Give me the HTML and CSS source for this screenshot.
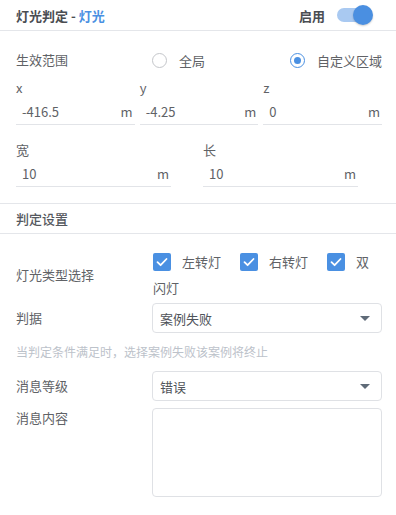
FILE: index.html
```html
<!DOCTYPE html>
<html lang="zh">
<head>
<meta charset="utf-8">
<link rel="stylesheet" href="styles.css">
</head>
<body>
<div class="panel">
  <div class="header">
    <div class="title">灯光判定 - <span class="accent">灯光</span></div>
    <div class="enable">
      <span>启用</span>
      <span class="switch"><span class="track"></span><span class="knob"></span></span>
    </div>
  </div>

  <div class="section">
    <div class="row scope">
      <div class="label">生效范围</div>
      <div class="radios">
        <label class="radio"><span class="dot"></span><span>全局</span></label>
        <label class="radio on"><span class="dot"></span><span>自定义区域</span></label>
      </div>
    </div>

    <div class="grid3">
      <div class="field">
        <div class="flabel">x</div>
        <div class="input"><span>-416.5</span><span>m</span></div>
      </div>
      <div class="field">
        <div class="flabel">y</div>
        <div class="input"><span>-4.25</span><span>m</span></div>
      </div>
      <div class="field">
        <div class="flabel">z</div>
        <div class="input"><span>0</span><span>m</span></div>
      </div>
    </div>

    <div class="grid2">
      <div class="field">
        <div class="flabel">宽</div>
        <div class="input"><span>10</span><span>m</span></div>
      </div>
      <div class="field">
        <div class="flabel">长</div>
        <div class="input"><span>10</span><span>m</span></div>
      </div>
    </div>
  </div>

  <div class="section-title">判定设置</div>

  <div class="section judge">
    <div class="row types">
      <div class="label">灯光类型选择</div>
      <div class="checks"><span class="cb"><svg viewBox="0 0 18 18" width="18" height="18"><path d="M4.5 9.2 L7.6 12.2 L13.5 6" fill="none" stroke="#fff" stroke-width="1.8" stroke-linecap="round" stroke-linejoin="round"/></svg></span><span class="ct">左转灯</span><span class="cb"><svg viewBox="0 0 18 18" width="18" height="18"><path d="M4.5 9.2 L7.6 12.2 L13.5 6" fill="none" stroke="#fff" stroke-width="1.8" stroke-linecap="round" stroke-linejoin="round"/></svg></span><span class="ct">右转灯</span><span class="cb"><svg viewBox="0 0 18 18" width="18" height="18"><path d="M4.5 9.2 L7.6 12.2 L13.5 6" fill="none" stroke="#fff" stroke-width="1.8" stroke-linecap="round" stroke-linejoin="round"/></svg></span><span class="ct last">双</span><span class="ct last">闪灯</span></div>
    </div>

    <div class="row sel-row">
      <div class="label">判据</div>
      <div class="select"><span>案例失败</span><span class="caret"></span></div>
    </div>

    <div class="hint">当判定条件满足时，选择案例失败该案例将终止</div>

    <div class="row sel-row">
      <div class="label">消息等级</div>
      <div class="select"><span>错误</span><span class="caret"></span></div>
    </div>

    <div class="row msg">
      <div class="label">消息内容</div>
      <div class="textarea"></div>
    </div>
  </div>
</div>
</body>
</html>
```

FILE: styles.css
```css
* { box-sizing: border-box; }
html, body { margin: 0; padding: 0; background: #fff; }
body {
  font-family: "Noto Sans CJK SC", "Noto Sans", sans-serif;
  font-size: 13px;
  color: #606266;
  width: 396px;
}
.header {
  height: 31px;
  display: flex;
  align-items: center;
  justify-content: space-between;
  padding: 0 23px 0 16px;
  border-bottom: 1px solid #e4e6ea;
}
.title { font-weight: 700; color: #4a4d52; font-size: 13px; }
.accent { color: #4a90e2; }
.enable {
  display: flex;
  align-items: center;
  gap: 12px;
  font-weight: 700;
  color: #4a4d52;
}
.switch {
  position: relative;
  width: 36px;
  height: 20px;
  display: inline-block;
}
.track {
  position: absolute;
  left: 0; top: 3px;
  width: 32px; height: 14px;
  border-radius: 7px;
  background: #a9c9f1;
}
.knob {
  position: absolute;
  right: 0; top: 0;
  width: 20px; height: 20px;
  border-radius: 50%;
  background: #4a8fe1;
  box-shadow: 0 1px 2px rgba(0,0,0,0.2);
}
.section { padding: 0 14px 0 16px; }
.row { display: flex; align-items: center; }
.label { width: 136px; flex: none; line-height: 20px; }
.scope { margin-top: 19px; height: 20px; }
.radios {
  flex: 1;
  display: flex;
  justify-content: space-between;
}
.radio { display: flex; align-items: center; gap: 12px; }
.dot {
  width: 15px; height: 15px;
  border-radius: 50%;
  border: 1px solid #c4c6ca;
  display: inline-block;
  position: relative;
}
.radio.on .dot { border-color: #4a90e2; }
.radio.on .dot::after {
  content: "";
  position: absolute;
  left: 3px; top: 3px;
  width: 7px; height: 7px;
  border-radius: 50%;
  background: #4a90e2;
}
.grid3 {
  display: grid;
  grid-template-columns: 1fr 1fr 1fr;
  column-gap: 5px;
  margin-top: 8px;
}
.grid2 {
  display: grid;
  grid-template-columns: 155px 155px;
  column-gap: 32px;
  margin-top: 15px;
}
.flabel { line-height: 20px; }
.input {
  margin-top: 2px;
  height: 25px;
  line-height: 24px;
  border-bottom: 1px solid #e2e4e8;
  display: flex;
  justify-content: space-between;
  padding: 0 2px 0 6px;
}
.section-title {
  margin-top: 16px;
  border-top: 1px solid #e4e6ea;
  border-bottom: 1px solid #e4e6ea;
  height: 31px;
  line-height: 29px;
  padding-left: 16px;
  font-weight: 500;
  color: #55585e;
}
.judge { padding-top: 15px; }
.types { align-items: center; }
.types .label { width: 136px; }
.checks {
  flex: 1;
  line-height: 26px;
  padding-left: 1px;
  word-break: break-all;
}
.cb {
  display: inline-block;
  width: 18px; height: 18px;
  border-radius: 2px;
  background: #4a90e2;
  vertical-align: -4px;
  margin-right: 11px;
}
.cb svg { display: block; }
.ct { margin-right: 19px; }
.ct.last { margin-right: 0; }
.sel-row { margin-top: 2px; }
.select {
  flex: 1;
  height: 30px;
  border: 1px solid #dfe1e5;
  border-radius: 4px;
  display: flex;
  align-items: center;
  justify-content: space-between;
  padding: 0 11px 0 7px;
  color: #4f5359;
}
.caret {
  width: 0; height: 0;
  border-left: 5px solid transparent;
  border-right: 5px solid transparent;
  border-top: 5px solid #5f6b78;
}
.hint {
  font-size: 12px;
  color: #bcc2ca;
  line-height: 20px;
  margin-top: 9px;
}
.hint + .sel-row { margin-top: 9px; }
.msg { align-items: flex-start; margin-top: 7px; }
.textarea {
  flex: 1;
  height: 89px;
  border: 1px solid #dfe1e5;
  border-radius: 4px;
}
```
